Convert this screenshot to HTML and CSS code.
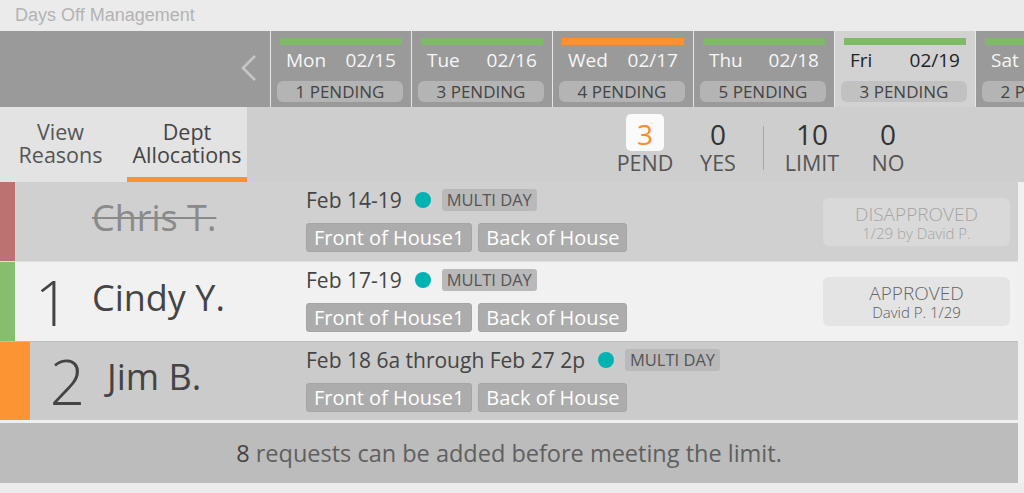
FILE: index.html
```html
<!DOCTYPE html>
<html>
<head>
<meta charset="utf-8">
<title>Days Off Management</title>
<link rel="stylesheet" href="styles.css">
</head>
<body>
<div class="app">
  <header class="title">Days Off Management</header>

  <nav class="days">
    <div class="days-nav">
      <svg class="chev" width="18" height="28" viewBox="0 0 18 28"><polyline points="15,2 3,14 15,26" fill="none" stroke="#c6c6c6" stroke-width="2.6"/></svg>
    </div>
    <div class="day">
      <div class="dbar green"></div>
      <div class="dlabel"><span>Mon</span><span>02/15</span></div>
      <div class="dpill">1 PENDING</div>
    </div>
    <div class="day">
      <div class="dbar green"></div>
      <div class="dlabel"><span>Tue</span><span>02/16</span></div>
      <div class="dpill">3 PENDING</div>
    </div>
    <div class="day">
      <div class="dbar orange"></div>
      <div class="dlabel"><span>Wed</span><span>02/17</span></div>
      <div class="dpill">4 PENDING</div>
    </div>
    <div class="day">
      <div class="dbar green"></div>
      <div class="dlabel"><span>Thu</span><span>02/18</span></div>
      <div class="dpill">5 PENDING</div>
    </div>
    <div class="day selected">
      <div class="dbar green"></div>
      <div class="dlabel"><span>Fri</span><span>02/19</span></div>
      <div class="dpill">3 PENDING</div>
    </div>
    <div class="day">
      <div class="dbar green"></div>
      <div class="dlabel"><span>Sat</span><span>02/20</span></div>
      <div class="dpill">2 PENDING</div>
    </div>
  </nav>

  <section class="toolbar">
    <div class="tabs">
      <div class="tab">View<br>Reasons</div>
      <div class="tab active">Dept<br>Allocations</div>
    </div>
    <div class="stats">
      <div class="stat pend"><div class="snum boxed">3</div><div class="slabel">PEND</div></div>
      <div class="stat yes"><div class="snum">0</div><div class="slabel">YES</div></div>
      <div class="sdivider"></div>
      <div class="stat limit"><div class="snum">10</div><div class="slabel">LIMIT</div></div>
      <div class="stat no"><div class="snum">0</div><div class="slabel">NO</div></div>
    </div>
  </section>

  <main class="main">
    <div class="list">
      <div class="row denied">
        <div class="who">
          <div class="flag red"></div>
          <div class="rnum"></div>
          <div class="name struck">Chris T.</div>
        </div>
        <div class="details">
          <div class="dateline"><span class="dates">Feb 14-19</span><span class="dot"></span><span class="mtag">MULTI DAY</span></div>
          <div class="depts"><span class="dept">Front of House1</span><span class="dept">Back of House</span></div>
        </div>
        <div class="status faded"><div class="st1">DISAPPROVED</div><div class="st2">1/29 by David P.</div></div>
      </div>

      <div class="row approved">
        <div class="who">
          <div class="flag green"></div>
          <div class="rnum">1</div>
          <div class="name">Cindy Y.</div>
        </div>
        <div class="details">
          <div class="dateline"><span class="dates">Feb 17-19</span><span class="dot"></span><span class="mtag">MULTI DAY</span></div>
          <div class="depts"><span class="dept">Front of House1</span><span class="dept">Back of House</span></div>
        </div>
        <div class="status"><div class="st1">APPROVED</div><div class="st2">David P. 1/29</div></div>
      </div>

      <div class="row pending">
        <div class="who">
          <div class="flag orange wide"></div>
          <div class="rnum">2</div>
          <div class="name">Jim B.</div>
        </div>
        <div class="details">
          <div class="dateline"><span class="dates">Feb 18 6a through Feb 27 2p</span><span class="dot"></span><span class="mtag">MULTI DAY</span></div>
          <div class="depts"><span class="dept">Front of House1</span><span class="dept">Back of House</span></div>
        </div>
      </div>

      <div class="footer"><b>8</b> requests can be added before meeting the limit.</div>
    </div>
    <div class="gutter"></div>
  </main>
</div>
</body>
</html>
```

FILE: styles.css
```css
* { box-sizing: border-box; }
html, body { margin: 0; padding: 0; }
body {
  width: 1024px;
  height: 493px;
  overflow: hidden;
  background: #ececec;
  font-family: "Open Sans", "Noto Sans", sans-serif;
  color: #444;
}

.title {
  height: 31px;
  line-height: 31px;
  padding-left: 15px;
  background: #ebebeb;
  font-family: "Liberation Sans", Arial, sans-serif;
  font-size: 18px;
  color: #b3b3b3;
}

/* day strip */
.days {
  display: flex;
  gap: 1px;
  height: 76px;
  background: #e6e6e6;
  overflow: hidden;
}
.days-nav {
  flex: none;
  width: 270px;
  background: #9a9a9a;
  display: flex;
  align-items: center;
  justify-content: flex-end;
  padding: 0 12px 3px 0;
}
.day {
  flex: none;
  width: 140px;
  background: #9a9a9a;
  padding-top: 7px;
  color: #f6f6f6;
}
.day.selected { background: #d2d2d2; color: #222; }
.dbar { height: 7px; margin: 0 9px; }
.dbar.green { background: #7fba66; }
.dbar.orange { background: #fb9232; }
.dlabel {
  display: flex;
  justify-content: space-between;
  padding: 0 15px;
  margin-top: 1px;
  height: 28px;
  line-height: 28px;
  font-size: 19px;
  white-space: nowrap;
}
.dpill {
  margin: 7px 8px 0 6px;
  height: 21px;
  line-height: 21px;
  border-radius: 6px;
  background: #b4b4b4;
  color: #444;
  text-align: center;
  font-size: 17px;
  white-space: nowrap;
}
.day.selected .dpill { background: #c1c1c1; }

/* toolbar */
.toolbar {
  display: flex;
  height: 75px;
  background: #cecece;
}
.tabs {
  flex: none;
  width: 247px;
  display: flex;
  background: #e3e3e3;
}
.tab {
  width: 121px;
  display: flex;
  align-items: center;
  justify-content: center;
  text-align: center;
  font-size: 21.5px;
  line-height: 23px;
  padding-top: 2px;
  color: #555;
  border-bottom: 5px solid transparent;
}
.tab.active {
  width: 120px;
  margin-left: 6px;
  color: #444;
  border-bottom-color: #fb9232;
}
.stats {
  display: flex;
  padding: 7px 0 0 367px;
}
.stat {
  display: flex;
  flex-direction: column;
  align-items: center;
}
.stat.pend { width: 62px; }
.stat.yes { width: 44px; margin-left: 20px; }
.stat.limit { width: 56px; margin-left: 20px; }
.stat.no { width: 56px; margin-left: 20px; }
.snum {
  height: 37px;
  padding-top: 3px;
  line-height: 34px;
  font-size: 28px;
  color: #333;
}
.snum.boxed {
  width: 38px;
  text-align: center;
  background: #fafafa;
  border-radius: 5px;
  color: #fb8c2a;
}
.slabel {
  line-height: 24px;
  font-size: 21.5px;
  color: #555;
}
.sdivider {
  width: 1px;
  height: 44px;
  margin: 12px 0 0 23px;
  background: #a8a8a8;
}

/* list */
.main { display: flex; }
.list { width: 1018px; flex: none; }
.gutter { flex: 1; background: #f0f0f0; }

.row {
  display: flex;
  align-items: center;
  height: 80px;
  border-bottom: 1px solid #dedede;
}
.row.denied { background: #d0d0d0; }
.row.approved { background: #f1f1f1; border-bottom-color: #bdbdbd; }
.row.pending { background: #cbcbcb; height: 81px; border-bottom: 3px solid #efefef; }

.who {
  flex: none;
  width: 306px;
  height: 100%;
  display: flex;
  align-items: center;
}
.flag { flex: none; width: 15px; height: 100%; }
.flag.wide { width: 30px; }
.flag.red { background: #bd7272; }
.flag.green { background: #87bd6e; }
.flag.orange { background: #fd9433; }
.rnum {
  flex: none;
  width: 75px;
  text-align: center;
  font-size: 62px;
  font-weight: 300;
  line-height: 70px;
  color: #444;
}
.name {
  flex: 1;
  padding: 0 0 8px 2px;
  font-size: 36px;
  line-height: 44px;
  color: #444;
  white-space: nowrap;
}
.name.struck {
  color: #8a8a8a;
  text-decoration: line-through;
  text-decoration-thickness: 2px;
}

.details {
  flex: 1;
  align-self: flex-start;
  padding-top: 7px;
}
.dateline {
  display: flex;
  align-items: center;
  height: 22px;
}
.dates { font-size: 21px; color: #444; white-space: nowrap; }
.dot {
  width: 16px;
  height: 16px;
  border-radius: 50%;
  background: #00b3b3;
  margin: 0 11px 0 13px;
}
.mtag {
  height: 22px;
  line-height: 22px;
  padding: 0 5px;
  border-radius: 3px;
  background: #b9b9b9;
  color: #555;
  font-size: 16.5px;
}
.depts {
  display: flex;
  gap: 6px;
  margin-top: 12px;
}
.dept {
  height: 29px;
  line-height: 27px;
  padding: 0 7px;
  border-radius: 3px;
  background: #acacac;
  border: 1px solid #a5a5a5;
  color: #fff;
  font-size: 20px;
  white-space: nowrap;
}

.status {
  flex: none;
  width: 187px;
  height: 49px;
  margin-right: 8px;
  border-radius: 6px;
  background: #e4e4e4;
  color: #666;
  text-align: center;
  padding-top: 6px;
}
.status.faded { background: #d9d9d9; color: #a4a4a4; height: 48px; }
.st1 { font-size: 19px; line-height: 20px; font-weight: 300; }
.st2 { font-size: 15px; line-height: 18px; font-weight: 300; }
.status:not(.faded) .st2 { color: #5a5a5a; }

.footer {
  height: 60px;
  line-height: 60px;
  background: #bcbcbc;
  text-align: center;
  font-size: 23.5px;
  color: #5f5f5f;
}
.footer b { font-weight: 400; color: #444; }
```
